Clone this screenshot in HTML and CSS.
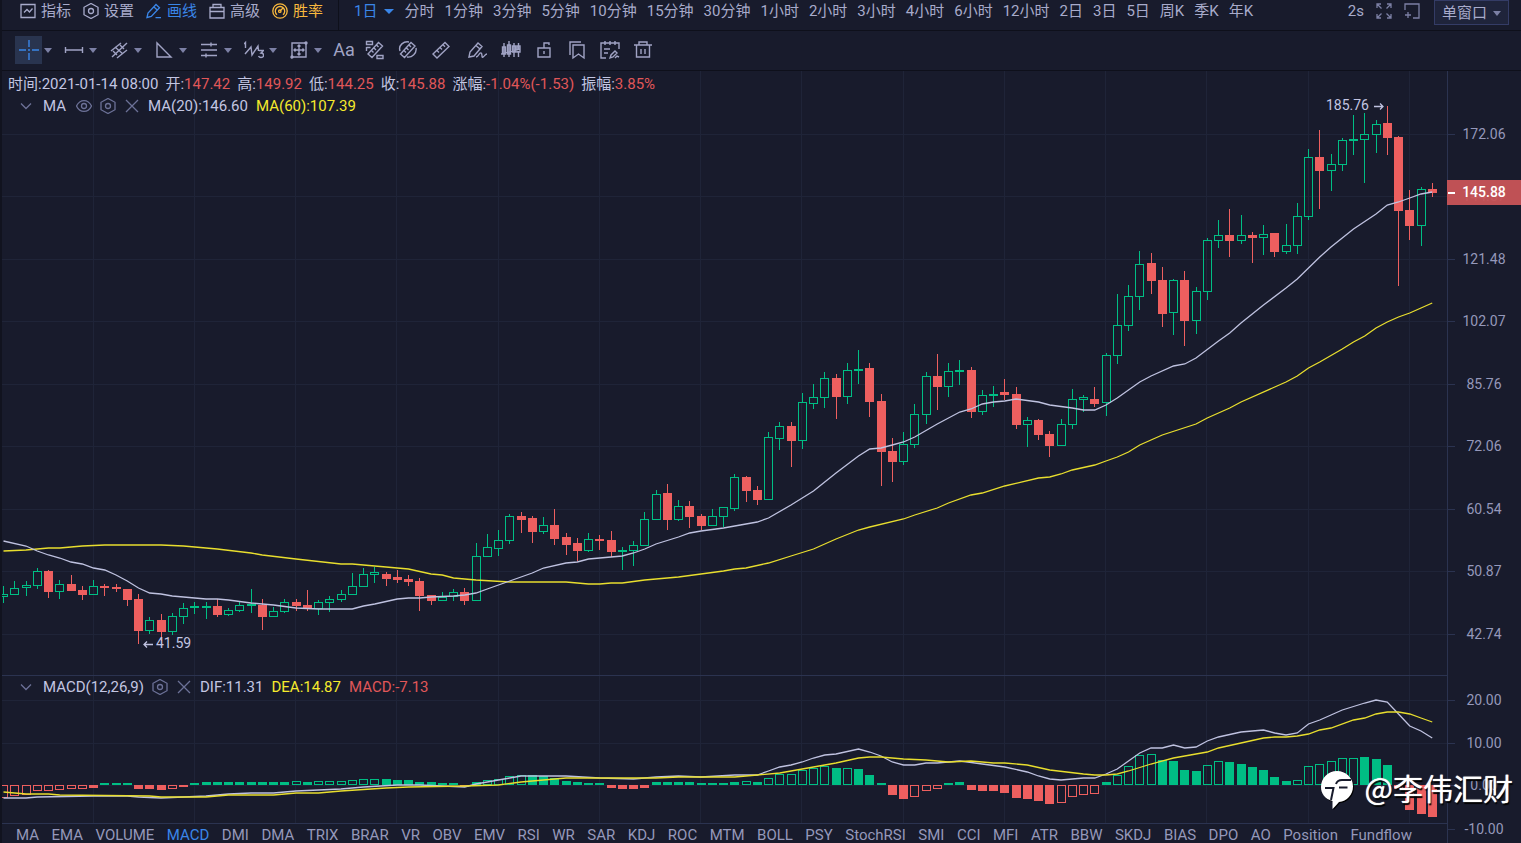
FILE: index.html
```html
<!DOCTYPE html>
<html lang="zh-CN">
<head>
    <meta charset="UTF-8">
    <meta name="viewport" content="width=device-width, initial-scale=1.0">
    <title>K线图</title>
    <link rel="stylesheet" href="styles.css">
</head>
<body>

<header class="header">
    <div class="menu">
        <button class="menu-item">
            <svg class="icon" viewBox="0 0 16 16"><path d="M1 1.500h14v13H1zM4 9.500l3-3 2.500 2.500 3-3.500"/></svg>指标
        </button>
        <button class="menu-item">
            <svg class="icon" viewBox="0 0 16 16"><path d="M8 .5l7 3.800v7.400l-7 3.800-7-3.800V4.300z"/><circle cx="8" cy="8" r="2.500"/></svg>设置
        </button>
        <button class="menu-item active">
            <svg class="icon" viewBox="0 0 16 16"><path d="M1 14.500l1-4.500 8-8.500 3.500 3.200-8.200 8.700zM8 4l3.500 3.200M9.500 14.700H15"/></svg>画线
        </button>
        <button class="menu-item">
            <svg class="icon" viewBox="0 0 16 16"><path d="M4 4V1.500h8V4M1 4.500h14v10.500H1zM1 8.500h14"/></svg>高级
        </button>
        <button class="menu-item gold">
            <svg class="icon" viewBox="0 0 16 16"><circle cx="8" cy="8" r="7.200"/><path d="M5 11.800a4.700 4.700 0 1 1 6 0M8 8l3-3"/><circle cx="7.800" cy="8.200" r="1.200"/></svg>胜率
        </button>
    </div>
    <nav class="periods">
        <a href="#" class="active">1日<i class="caret"></i></a>
        <a href="#">分时</a>
        <a href="#">1分钟</a>
        <a href="#">3分钟</a>
        <a href="#">5分钟</a>
        <a href="#">10分钟</a>
        <a href="#">15分钟</a>
        <a href="#">30分钟</a>
        <a href="#">1小时</a>
        <a href="#">2小时</a>
        <a href="#">3小时</a>
        <a href="#">4小时</a>
        <a href="#">6小时</a>
        <a href="#">12小时</a>
        <a href="#">2日</a>
        <a href="#">3日</a>
        <a href="#">5日</a>
        <a href="#">周K</a>
        <a href="#">季K</a>
        <a href="#">年K</a>
    </nav>
    <div class="window-tools">
        <span>2s</span>
        <button aria-label="全屏">
            <svg class="icon" viewBox="0 0 16 16"><path d="M1 5V1h4M1 1l4.500 4.500M11 1h4v4M15 1l-4.500 4.500M1 11v4h4M1 15l4.500-4.500M15 11v4h-4M15 15l-4.500-4.500"/></svg>
        </button>
        <button aria-label="新窗口">
            <svg class="icon" viewBox="0 0 16 16"><path d="M1 7V1h14v14H9M4 9v6M1 12h6"/></svg>
        </button>
        <div class="select-wrap">
            <select aria-label="窗口">
                <option>单窗口</option>
            </select>
            <i class="caret"></i>
        </div>
    </div>
</header>

<div class="toolbar">
    <div class="tools">
        <button class="tool selected" aria-label="十字光标"><svg viewBox="0 0 20 20"><path d="M10 0v7M10 13v7M0 10h7M13 10h7M9 10h2"/></svg></button><button class="more" aria-label="更多"><i class="caret"></i></button>
        <button class="tool" aria-label="线段"><svg viewBox="0 0 20 20"><path d="M1.500 7v6M18.500 7v6M2 10h16"/></svg></button><button class="more" aria-label="更多"><i class="caret"></i></button>
        <button class="tool" aria-label="平行线"><svg viewBox="0 0 20 20"><path d="M2 11L12 3M3 17L18 3M8 18l10-8M6 7l8 7M4 11l4 4M11 5l4 4"/></svg></button><button class="more" aria-label="更多"><i class="caret"></i></button>
        <button class="tool" aria-label="三角形"><svg viewBox="0 0 20 20"><path d="M3 3v14h14z"/></svg></button><button class="more" aria-label="更多"><i class="caret"></i></button>
        <button class="tool" aria-label="水平线"><svg viewBox="0 0 20 20"><path d="M2 4.500h16M2 10h16M2 15.500h16M12 2.500v4M7 13.500v4"/></svg></button><button class="more" aria-label="更多"><i class="caret"></i></button>
        <button class="tool" aria-label="波浪"><svg viewBox="0 0 20 20"><path d="M0 4l1.500-1.500V8M1 14l6-7 1 8 6-9 .500 5M15 10.500h4.500L17 13c3.500 0 3.500 4.500 0 4.500-1.500 0-2-.500-2.500-1.500"/></svg></button><button class="more" aria-label="更多"><i class="caret"></i></button>
        <button class="tool" aria-label="区间"><svg viewBox="0 0 20 20"><path d="M3 3h14v14H3zM10 5v10M5 10h10M8.500 6.500L10 5l1.500 1.500M8.500 13.500L10 15l1.500-1.500M6.500 8.500L5 10l1.500 1.500M13.500 8.500L15 10l-1.500 1.500"/><circle class="knob" cx="17" cy="3" r="1"/><circle class="knob" cx="3" cy="17" r="1"/></svg></button><button class="more" aria-label="更多"><i class="caret"></i></button>
    </div>
    <div class="tools wide">
        <button class="tool letters">Aa</button>
        <button class="tool" aria-label="测量组"><svg viewBox="0 0 20 20"><path d="M3 14L13.500 2.500l4 3.500L7 17.500zM6.500 10.500l2 2M9 8l2 2M11.500 5l2 2M1.500 1.500h6v3h-6zM1.500 7v4M1.500 7.500h4M12 15.500h6v3h-6z"/></svg></button>
        <button class="tool" aria-label="区间测量"><svg viewBox="0 0 20 20"><path d="M2.500 14L13 2.500l4 3.500L6.500 17.500zM6 10.500l2 2M8.500 8l2 2M11 5l2 2M2 11C0 5 6 1 11 2M18 8c1 5-4 10-9 9"/></svg></button>
        <button class="tool" aria-label="标尺"><svg viewBox="0 0 20 20"><path d="M2 14L14 2.500l4 4L6 18zM6 10.500l2 2M9 7.500l2 2M12 4.700l2 2"/></svg></button>
    </div>
    <div class="tools wide">
        <button class="tool" aria-label="画笔"><svg viewBox="0 0 20 20"><path d="M1 17l1-5 8-9 4 3.500L6 16zM8 5.500l4 3.500M8 17c3 0 3-5 5-4s0 5 2 4 2-3 4-3"/></svg></button>
        <button class="tool" aria-label="形态"><svg viewBox="0 0 20 20"><path d="M3 3v14M8 1v16M13 3v14M17.500 3v14M1.500 7h3v7h-3zM6.500 5h3v9h-3zM11.500 6h3v6h-3zM16 6h3v6h-3zM0 14l19-5"/></svg></button>
        <button class="tool" aria-label="锁定"><svg viewBox="0 0 20 20"><path d="M4 8h12v9H4zM10 8V3h5v2M10 11v3"/></svg></button>
        <button class="tool" aria-label="书签"><svg viewBox="0 0 20 20"><path d="M3 15V2h11M6 5h11v13l-5.500-4L6 18z"/></svg></button>
        <button class="tool" aria-label="画线管理"><svg viewBox="0 0 20 20"><path d="M6 18H1V3h18v6M5 1v4M10 1v4M15 1v4M4 9h6M4 13h4M10 18l1-3 4-4 2 2-4 4zM15 18l2-2 2 1"/></svg></button>
        <button class="tool" aria-label="删除"><svg viewBox="0 0 20 20"><path d="M1 5h18M6 5V2h8v3M3.500 5v12h13V5M8 9v5M12 9v5"/></svg></button>
    </div>
</div>

<main class="workspace">
    <div class="charts">
        <section class="pane price-pane">
            <svg id="price" class="plot"></svg>
            <div class="quote">
                <span>时间:2021-01-14 08:00</span>
                <span>开:<b>147.42</b></span>
                <span>高:<b>149.92</b></span>
                <span>低:<b>144.25</b></span>
                <span>收:<b>145.88</b></span>
                <span>涨幅:<b>-1.04%(-1.53)</b></span>
                <span>振幅:<b>3.85%</b></span>
            </div>
            <div class="legend">
                <button aria-label="收起"><svg class="chevron" viewBox="0 0 12 8"><path d="M1 1.500l5 5 5-5"/></svg></button>
                <span class="name">MA</span>
                <button aria-label="显示"><svg class="icon" viewBox="0 0 16 16"><path d="M.5 8C4 .800 12 .800 15.500 8 12 15.200 4 15.200 .5 8z"/><circle cx="8" cy="8" r="2.500"/></svg></button>
                <button aria-label="设置"><svg class="icon" viewBox="0 0 16 16"><path d="M8 .5l7 3.800v7.400l-7 3.800-7-3.800V4.300z"/><circle cx="8" cy="8" r="2.500"/></svg></button>
                <button aria-label="关闭"><svg class="icon" viewBox="0 0 16 16"><path d="M2 2l12 12M14 2L2 14"/></svg></button>
                <span>MA(20):146.60</span>
                <span class="yellow">MA(60):107.39</span>
            </div>
        </section>
        <section class="pane macd-pane">
            <svg id="macd" class="plot"></svg>
            <div class="legend">
                <button aria-label="收起"><svg class="chevron" viewBox="0 0 12 8"><path d="M1 1.500l5 5 5-5"/></svg></button>
                <span class="name">MACD(12,26,9)</span>
                <button aria-label="设置"><svg class="icon" viewBox="0 0 16 16"><path d="M8 .5l7 3.800v7.400l-7 3.800-7-3.800V4.300z"/><circle cx="8" cy="8" r="2.500"/></svg></button>
                <button aria-label="关闭"><svg class="icon" viewBox="0 0 16 16"><path d="M2 2l12 12M14 2L2 14"/></svg></button>
                <span>DIF:11.31</span>
                <span class="yellow">DEA:14.87</span>
                <span class="red">MACD:-7.13</span>
            </div>
        </section>
        <nav class="indicators">
            <a href="#">MA</a>
            <a href="#">EMA</a>
            <a href="#">VOLUME</a>
            <a href="#" class="active">MACD</a>
            <a href="#">DMI</a>
            <a href="#">DMA</a>
            <a href="#">TRIX</a>
            <a href="#">BRAR</a>
            <a href="#">VR</a>
            <a href="#">OBV</a>
            <a href="#">EMV</a>
            <a href="#">RSI</a>
            <a href="#">WR</a>
            <a href="#">SAR</a>
            <a href="#">KDJ</a>
            <a href="#">ROC</a>
            <a href="#">MTM</a>
            <a href="#">BOLL</a>
            <a href="#">PSY</a>
            <a href="#">StochRSI</a>
            <a href="#">SMI</a>
            <a href="#">CCI</a>
            <a href="#">MFI</a>
            <a href="#">ATR</a>
            <a href="#">BBW</a>
            <a href="#">SKDJ</a>
            <a href="#">BIAS</a>
            <a href="#">DPO</a>
            <a href="#">AO</a>
            <a href="#">Position</a>
            <a href="#">Fundflow</a>
        </nav>
    </div>
    <div class="axis"><svg id="axis" class="plot"></svg></div>
    <div class="watermark">
        <svg viewBox="0 0 34 40">
            <path class="shade" d="M17 1a16 15.500 0 0 1 16 15.500c0 8-6 15-14 15.500-2 2-4 5-6.500 7V31C5 29 1 23.500 1 17 1 8 8 1 17 1z"/>
            <path class="disc" d="M16 0a16 15.500 0 0 1 16 15.500c0 8-6 15-14 15.500-2 2-4 5-6.500 7V30C4 28 0 22.500 0 16 0 7 7 0 16 0z"/>
            <path class="cut" d="M4 17h8.500L10 29M15 13c1-3 3-4 6-4h9M18 16.500h8.500"/>
        </svg>
        <span>@李伟汇财</span>
    </div>
</main>

<script src="script.js"></script>
</body>
</html>
```

FILE: styles.css
```css
* {
    box-sizing: border-box;
}
body {
    height: 100vh;
    display: flex;
    flex-direction: column;
    margin: 0;
    border-left: 2px solid #11131f;
    overflow: hidden;
    background-color: #181b2c;
    color: #c3c6e2;
    font-family: Roboto, "Noto Sans CJK SC", sans-serif;
    font-size: 15px;
}
button {
    padding: 0;
    border: 0;
    background: none;
    color: inherit;
    font: inherit;
    cursor: pointer;
}
a {
    color: inherit;
    text-decoration: none;
}
svg {
    fill: none;
    stroke: currentColor;
}
.icon {
    width: 16px;
    height: 16px;
    flex: none;
    stroke-width: 1.3;
}
.caret {
    width: 0;
    height: 0;
    border: 4px solid transparent;
    border-top: 5px solid #7c80a5;
    border-bottom: 0;
}
.active {
    color: #3a86e8;
}
.yellow {
    color: #f5ea2c;
}
.red {
    color: #e05759;
}

/* top bar */
.header {
    display: flex;
    height: 31px;
    flex: none;
    border-bottom: 1px solid #0e101b;
    color: #a8abcb;
    line-height: 22px;
    white-space: nowrap;
}
.menu {
    display: flex;
    gap: 12px;
    padding: 0 15px 8px 18px;
    border-right: 1px solid #0e101b;
}
.menu-item {
    display: flex;
    align-items: center;
    gap: 5px;
}
.menu-item.active {
    color: #3a86e8;
}
.menu-item.gold {
    color: #f9b93e;
}
.periods {
    display: flex;
    flex: 1;
    gap: 10px;
    padding-left: 15px;
}
.periods .active {
    display: flex;
    margin-right: 1px;
}
.periods .caret {
    margin: 9px 0 0 6px;
    border-width: 5px 5px 0;
    border-top-color: #3a86e8;
}
.window-tools {
    display: flex;
    gap: 12px;
    padding-right: 12px;
}
.window-tools button {
    display: flex;
    height: 22px;
    align-items: center;
    color: #7c80a5;
}
.select-wrap {
    position: relative;
    margin-left: 2px;
}
.select-wrap select {
    appearance: none;
    display: block;
    width: 75px;
    height: 25px;
    padding: 0 0 0 7px;
    border: 1px solid #343c66;
    border-radius: 0;
    background-color: #1f243b;
    color: #a8abcb;
    font: inherit;
}
.select-wrap .caret {
    position: absolute;
    right: 8px;
    top: 11px;
    pointer-events: none;
}

/* drawing tools */
.toolbar {
    display: flex;
    height: 40px;
    flex: none;
    align-items: center;
    padding: 0 0 2px 13px;
    border-bottom: 1px solid #0e101b;
    color: #a0a3c4;
}
.tools {
    display: flex;
}
.tool {
    display: flex;
    width: 27px;
    height: 28px;
    align-items: center;
    justify-content: center;
}
.tool svg {
    width: 20px;
    height: 20px;
    stroke-width: 1.4;
}
.tool.selected {
    background-color: #29344f;
    color: #3a86e8;
}
.tool .knob {
    fill: #a0a3c4;
}
.more {
    display: flex;
    width: 18px;
    align-items: center;
    padding: 2px 0 0 2px;
}
.wide .tool {
    width: 33px;
}
.wide + .wide {
    margin-left: 4px;
}
.wide .letters {
    width: 28px;
    font-size: 18px;
}

/* charts */
.workspace {
    display: flex;
    flex: 1;
    min-height: 0;
    position: relative;
}
.charts {
    display: grid;
    flex: 1;
    min-width: 0;
    grid-template-rows: 604fr 148fr 20px;
}
.pane {
    position: relative;
    min-height: 0;
}
.plot {
    position: absolute;
    left: 0;
    top: 0;
    width: 100%;
    height: 100%;
}
.quote,
.legend {
    display: flex;
    position: relative;
    align-items: center;
    height: 22px;
    white-space: nowrap;
}
.quote {
    gap: 7px;
    margin-bottom: 2px;
    padding-left: 6px;
}
.quote b {
    color: #e05759;
    font-weight: normal;
}
.legend {
    gap: 8px;
    padding-left: 18px;
}
.legend button {
    display: flex;
    color: #6c7197;
}
.legend .name {
    margin-left: 3px;
}
.price-pane .name {
    margin-right: 2px;
}
.chevron {
    width: 12px;
    height: 8px;
    stroke-width: 1.3;
}
.macd-pane {
    border-top: 1px solid #2b3350;
}
.indicators {
    display: flex;
    justify-content: space-between;
    padding: 3px 35px 0 14px;
    border-top: 1px solid #2b3350;
    color: #9598ba;
    line-height: 16px;
    white-space: nowrap;
}
.indicators .active {
    color: #3a86e8;
}
.axis {
    position: relative;
    width: 74px;
    border-left: 1px solid #2b3350;
}
.axis .plot {
    overflow: visible;
}

/* plot parts */
.plot text {
    fill: #9598ba;
    stroke: none;
    font-size: 14px;
}
.plot .mark {
    fill: #c3c6e2;
}
.grid {
    stroke: #1f2438;
}
.tick {
    stroke: #2b3350;
}
.up {
    stroke: #00be84;
}
.down {
    stroke: #ed5f5f;
}
.up.solid {
    fill: #00be84;
}
.down.solid {
    fill: #ed5f5f;
}
.line-white {
    stroke: #bfc2e0;
    stroke-width: 1.3;
}
.line-yellow {
    stroke: #e8de2e;
    stroke-width: 1.3;
}
.tag {
    fill: #c85457;
    fill-opacity: 0.95;
    stroke: none;
}
.plot .tag-text {
    fill: #ffffff;
    font-weight: 500;
}
.tag-tick {
    stroke: #ffffff;
    stroke-width: 2;
}

.watermark {
    position: absolute;
    right: 8px;
    bottom: 32px;
    display: flex;
    gap: 10px;
    color: #ffffff;
    font-family: "Noto Sans CJK SC", sans-serif;
    font-size: 30px;
    line-height: 44px;
    text-shadow: 0 0 1px #ffffff, 1px 2px 1px #000000;
    pointer-events: none;
}
.watermark svg {
    width: 34px;
    height: 40px;
    margin-top: 6px;
    stroke: none;
}
.watermark .disc {
    fill: #ffffff;
}
.watermark .shade {
    fill: #000000;
}
.watermark .cut {
    stroke: #181b2c;
    stroke-width: 2;
}
```

FILE: script.js
```js
// direction, high, body top, body bottom, low (levels inside a 604 unit high pane, offset 71)
const candles = `
u 586 594 597 603,u 581 588 595 595,u 581 585 588 596,u 568 571 586 589,d 570 571 592 598,u 580 584 592 599,
d 575 584 591 591,d 586 590 595 600,u 580 586 595 595,d 584 586 588 596,d 584 587 589 592,d 589 589 600 606,
d 594 599 631 644,u 617 620 631 634,d 614 620 632 641,u 613 616 632 635,u 603 608 617 624,u 602 606 608 614,
u 602 606 608 619,d 599 606 615 617,u 608 610 615 616,u 601 605 611 612,u 589 604 606 613,d 599 605 617 630,
u 607 611 617 617,u 599 602 612 613,d 599 602 606 611,d 590 605 608 611,u 600 602 609 615,u 596 599 603 612,
u 590 594 600 602,u 573 586 595 595,u 568 574 587 587,u 567 572 575 583,d 572 574 579 586,d 570 577 580 583,
d 575 579 582 586,d 578 581 596 611,d 595 595 601 605,u 592 597 601 601,u 589 592 597 601,d 588 592 601 605,
u 543 556 601 601,u 534 547 557 557,u 530 540 549 556,u 514 516 541 544,d 512 516 520 533,d 516 518 532 543,
u 517 525 532 534,d 509 525 539 545,d 533 537 545 555,d 538 543 551 561,u 533 539 551 552,d 535 539 541 550,
d 531 540 552 557,u 547 550 552 570,u 541 545 551 566,u 512 519 546 546,u 490 494 520 520,d 484 493 520 530,
u 500 506 520 521,d 501 506 517 528,d 514 516 526 530,u 509 516 526 526,u 507 507 517 527,u 474 477 509 511,
d 476 477 491 502,d 486 490 500 505,u 432 437 500 500,u 422 426 439 450,d 422 426 441 467,u 393 402 441 449,
u 384 397 404 409,u 372 378 398 408,d 374 378 397 419,u 363 370 397 404,u 350 369 371 384,d 363 368 402 417,
d 394 401 452 486,d 438 451 462 482,u 432 444 462 465,u 404 414 445 448,u 372 376 415 424,d 354 376 387 410,
u 363 371 387 397,u 360 370 372 385,d 367 370 412 418,u 390 395 412 415,u 386 394 396 407,d 379 392 395 400,
d 387 394 425 429,u 417 420 425 447,d 419 420 435 440,d 431 434 446 457,u 419 424 446 446,u 389 399 425 429,
u 395 397 400 412,d 387 399 404 407,u 353 355 403 416,u 294 325 356 364,u 285 296 326 331,u 251 264 297 310,
d 253 263 281 294,d 267 280 314 327,u 279 280 313 335,d 271 280 321 346,u 287 291 321 334,u 238 240 292 300,
u 220 235 241 248,d 209 235 241 257,u 215 235 241 244,d 232 235 238 263,u 225 234 238 255,d 233 233 252 257,
u 224 245 252 254,u 203 216 246 254,u 149 157 217 220,d 130 157 171 209,u 154 164 171 191,u 138 140 165 171,
u 115 139 141 155,u 113 134 140 183,u 120 124 135 153,d 106 123 138 155,d 136 137 211 286,d 190 210 226 240,
u 187 189 226 246,d 183 189 193 197`.trim().split(",").map(row => row.trim().split(" "))

// candle index, level
const ma20 = "0 541,2 546,3 551,4 555,5 558,6 562,7 564,8 568,9 570,10 575,11 581,12 588,13 593,14 594,15 596,16 597,18 599,19 599,20 600,22 603,24 605,26 608,28 609,31 609,32 606,33 604,35 599,36 598,37 598,38 597,40 596,41 595,42 593,43 589,44 585,45 581,47 573,48 568,50 563,51 562,52 559,55 556,56 553,57 549,58 544,60 537,61 533,62 531,64 528,65 526,66 524,67 522,68 518,70 505,72 491,74 473,76 456,77 449,78 448,79 445,80 442,81 437,83 424,85 412,86 409,87 404,88 402,89 401,90 399,92 402,93 405,95 408,96 410,97 410,98 405,99 398,101 382,102 376,104 366,105 364,106 358,108 341,109 333,110 323,112 305,114 288,115 279,117 257,118 247,120 229,122 214,123 205,124 202,125 198,126 194,127 192"
const ma60 = "0 551,2 550,3 549,4 548,5 548,7 546,9 545,14 545,16 546,19 549,22 553,23 555,26 559,30 564,31 564,33 566,36 569,38 574,39 575,40 578,42 580,45 582,50 582,52 584,53 584,54 583,55 583,57 580,60 577,64 571,65 569,66 568,68 563,70 556,72 549,74 539,76 530,77 527,80 519,81 515,83 508,84 503,86 495,87 493,89 486,92 478,93 477,94 474,95 470,97 465,98 461,99 457,100 452,101 445,103 435,106 424,107 418,109 408,110 402,113 387,114 382,115 376,116 368,117 362,119 349,120 342,121 336,122 328,123 322,124 317,125 313,126 308,127 303"
const dif = "0 798,2 798,3 797,8 796,11 796,12 797,14 798,16 797,18 796,20 794,22 793,24 793,26 791,30 789,32 787,35 785,37 785,39 786,41 787,42 784,43 782,44 780,45 778,46 776,50 776,53 778,56 779,58 777,60 776,62 777,65 775,67 775,68 771,69 767,70 765,71 762,72 758,73 755,74 754,76 749,77 752,78 756,79 762,80 765,81 765,82 763,83 763,85 761,87 764,89 767,91 772,92 776,93 779,94 780,96 778,97 778,98 774,99 769,100 761,101 753,102 748,103 748,104 745,105 748,106 747,107 741,108 737,110 732,112 730,113 733,114 735,115 733,116 724,117 720,118 715,119 710,121 703,122 700,123 702,124 714,125 726,126 731,127 738"
const dea = "0 792,2 794,4 794,5 795,13 796,14 797,18 797,20 795,24 795,26 793,28 793,30 791,34 788,36 787,41 786,44 785,46 782,48 780,50 778,58 778,60 777,65 777,67 775,69 773,70 771,72 767,74 763,76 758,77 757,78 757,80 759,82 760,84 762,86 761,88 763,89 763,91 765,93 770,96 774,97 775,98 775,99 774,100 771,102 764,104 758,105 756,106 754,107 752,108 748,110 743,112 738,113 737,114 737,115 736,116 734,117 730,118 728,120 720,121 718,122 714,123 712,124 712,125 714,126 718,127 722"

// MACD histogram heights, "s" marks a solid bar
const bars = "-13 -11 -10 -6 -6 -5 -4 -4 -3s 2s 2s 2s -4s -4s -5s -4 -2s 2s 3s 3s 3s 3s 3s 3s 3s 3s 4 3s 4 4 4 5 6 6 6s 5s 5s 3s 3s 2s 2s -1s 3s 5 6 9 10 10s 9s 7s 4s 3s 2s 2s -3s -4s -4s -3s 3s 3s 3s 3s 2s 2s 2s 3s 4 3s 7 11 11 15 17 19 17s 17 16s 10s 2s -10s -14s -12 -6 -4 2s 3s -5s -6s -6s -8s -13s -14s -16s -19s -18 -12 -10 -9 3s 10 19 30 31 25s 24s 15s 14s 20 24 23s 21s 18s 15s 8s 4s 5 19 21 24 27 27 28s 26s 20s -4s -25s -29s -32s".split(" ")

const priceTicks = [[134, "172.06"], [196, "144.57"], [259, "121.48"], [321, "102.07"], [384, "85.76"], [446, "72.06"], [509, "60.54"], [571, "50.87"], [634, "42.74"]]
const macdTicks = [[700, "20.00"], [743, "10.00"], [785, "0.00"], [829, "-10.00"]]

const price = document.getElementById("price")
const macd = document.getElementById("macd")
const axis = document.getElementById("axis")

function hline(x1, x2, y, cls) {
  return `<path class="${cls}" d="M${x1} ${y + 0.5}H${x2}"/>`
}

function vline(x, y1, y2, cls) {
  return `<path class="${cls}" d="M${x + 0.5} ${y1}V${y2}"/>`
}

function box(x, top, bottom, cls) {
  return `<rect class="${cls}" x="${x + 0.5}" y="${top + 0.5}" width="8" height="${Math.max(bottom - top - 1, 1)}"/>`
}

function curve(points, sx, sy, cls) {
  const list = points.split(",").map(p => {
    const [i, y] = p.split(" ")
    return sx(+i) + "," + sy(+y)
  })
  return `<polyline class="${cls}" points="${list.join(" ")}"/>`
}

function draw() {
  const width = price.clientWidth
  const priceHeight = price.clientHeight
  const macdHeight = macd.clientHeight
  const step = (width - 5) / 128
  const sx = i => 1.5 + i * step
  const py = y => Math.round((y - 71) * priceHeight / 604)
  const my = y => Math.round((y - 676) * macdHeight / 147)

  let grid = ""
  for (let i = 8; i < 128; i += 9) {
    grid += vline(Math.round(sx(i)) - 1, 0, priceHeight, "grid")
  }

  let html = grid
  priceTicks.forEach(t => html += hline(0, width, py(t[0]), "grid"))
  candles.forEach((c, i) => {
    const x = Math.round(sx(i) - 4.5)
    const [high, top, bottom, low] = c.slice(1).map(v => py(+v))
    const cls = c[0] === "u" ? "up" : "down"
    html += vline(x + 4, high, top, cls) + vline(x + 4, bottom, low, cls)
    html += box(x, top, bottom, cls === "up" ? "up" : "down solid")
  })
  html += curve(ma60, sx, py, "line-yellow")
  html += curve(ma20, sx, py, "line-white")

  // lowest and highest price
  const lowX = Math.round(sx(12)), lowY = py(644)
  const highX = Math.round(sx(123)), highY = py(106)
  html += `<path class="line-white" d="M${lowX + 14} ${lowY + 0.5}h-9m3-3l-3 3l3 3"/>`
  html += `<text class="mark" x="${lowX + 17}" y="${lowY + 4}">41.59</text>`
  html += `<path class="line-white" d="M${highX - 13} ${highY + 0.5}h9m-3-3l3 3l-3 3"/>`
  html += `<text class="mark" x="${highX - 18}" y="${highY + 4}" text-anchor="end">185.76</text>`
  price.innerHTML = html

  html = grid
  macdTicks.slice(0, 3).forEach(t => html += hline(0, width, my(t[0]), "grid"))
  bars.forEach((b, i) => {
    const x = Math.round(sx(i) - 4.5)
    const value = parseInt(b)
    const cls = (value > 0 ? "up" : "down") + (b.endsWith("s") ? " solid" : "")
    const zero = my(785)
    html += value > 0 ? box(x, my(785 - value), zero, cls) : box(x, zero, my(785 - value), cls)
  })
  html += curve(dif, sx, my, "line-white")
  html += curve(dea, sx, my, "line-yellow")
  macd.innerHTML = html

  html = ""
  const ticks = priceTicks.map(t => [py(t[0]), t[1]])
    .concat(macdTicks.map(t => [my(t[0]) + priceHeight + 1, t[1]]))
  ticks.forEach(t => {
    html += hline(0, 7, t[0], "tick")
    html += `<text x="36" y="${t[0] + 5}" text-anchor="middle">${t[1]}</text>`
  })
  const last = py(192)
  html += `<rect class="tag" x="-1" y="${last - 12}" width="74" height="25"/>`
  html += `<path class="tag-tick" d="M0 ${last + 1}h7"/>`
  html += `<text class="tag-text" x="36" y="${last + 5}" text-anchor="middle">145.88</text>`
  axis.innerHTML = html
}

draw()
window.addEventListener("resize", draw)
```
